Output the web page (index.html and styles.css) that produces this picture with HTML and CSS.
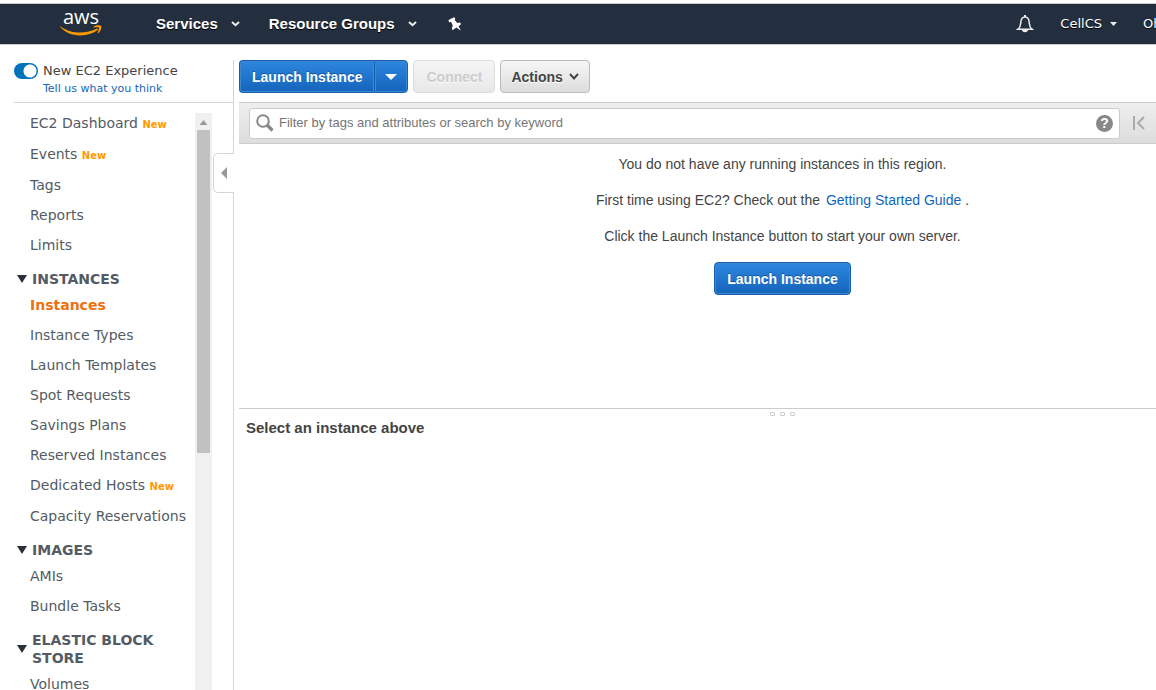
FILE: index.html
```html
<!DOCTYPE html>
<html lang="en">
<head>
<meta charset="utf-8">
<meta name="viewport" content="width=device-width, initial-scale=1">
<title>EC2 Management Console</title>
<link rel="stylesheet" href="styles.css">
</head>
<body>
<header class="topnav">
  <a class="logo" href="#" aria-label="AWS home">
    <svg width="42" height="28" viewBox="0 0 42 28">
      <text x="21" y="14" text-anchor="middle" class="logo-text">aws</text>
      <path d="M0 16.2c7 5 13.500 6.300 20 6.300 6 0 11.800-1.500 17-4l1 1.300c-5 3.800-11 5.700-18 5.700-8 0-15-3.200-20-8.700z" fill="#f90"/>
      <path d="M33.500 16.700c2.500-1.800 6-1.900 7.700-1 .6 2-.6 5.500-2.800 7.500l-.8-.4c.7-1.800 1.700-4.300 1.200-5.200-.7-.7-3.300-.3-5.100-.1z" fill="#f90"/>
    </svg>
  </a>
  <button class="nav-item nav-services" type="button">Services
    <svg width="9" height="6" viewBox="0 0 9 6"><path d="M1 1l3.500 3.200L8 1" class="nav-chevron"/></svg>
  </button>
  <button class="nav-item nav-groups" type="button">Resource Groups
    <svg width="9" height="6" viewBox="0 0 9 6"><path d="M1 1l3.500 3.200L8 1" class="nav-chevron"/></svg>
  </button>
  <button class="nav-icon" type="button" aria-label="Pin shortcuts">
    <svg width="14" height="14" viewBox="0 0 14 14"><path d="M.5 3L6 .3l1.300 1-.6 1.600 2.600 3 2.500-.3 1.400 1.400-2.600 2.200 2.300 4.600-4.400-3.300L4.500 13.300 3.800 11l1-2.300L3.200 5 1 5.200z" fill="#fff"/></svg>
  </button>
  <div class="nav-right">
    <button class="nav-icon" type="button" aria-label="Notifications">
      <svg width="16" height="18" viewBox="0 0 16 18"><path d="M1 14.200c2-1.500 2.500-3 2.700-6C3.900 4 5.300 2 8 2s4.100 2 4.300 6.200c.2 3 .7 4.500 2.700 6z" fill="none" stroke="#eee" stroke-width="1.500"/><path d="M7 0h2v2H7zM5 15h6c-.5 3-5.500 3-6 0z" fill="#eee"/></svg>
    </button>
    <button class="nav-item nav-account" type="button">CellCS
      <svg width="7" height="4" viewBox="0 0 7 4"><path d="M0 0h7L3.500 4z" fill="#eee"/></svg>
    </button>
    <button class="nav-item nav-region" type="button">Ohio</button>
  </div>
</header>

<div class="shell">
  <aside class="sidebar">
    <div class="experience">
      <input class="switch" type="checkbox" id="new-exp" checked>
      <div class="experience-text">
        <label for="new-exp">New EC2 Experience</label>
        <a href="#">Tell us what you think</a>
      </div>
    </div>
    <div class="side-body">
      <nav class="side-nav">
        <a class="item has-new" href="#">EC2 Dashboard <b class="new">New</b></a>
        <a class="item has-new" href="#">Events <b class="new">New</b></a>
        <a class="item" href="#">Tags</a>
        <a class="item" href="#">Reports</a>
        <a class="item" href="#">Limits</a>
        <button class="group" type="button"><i class="tri"></i><span>INSTANCES</span></button>
        <a class="item active" href="#">Instances</a>
        <a class="item" href="#">Instance Types</a>
        <a class="item" href="#">Launch Templates</a>
        <a class="item" href="#">Spot Requests</a>
        <a class="item" href="#">Savings Plans</a>
        <a class="item" href="#">Reserved Instances</a>
        <a class="item has-new" href="#">Dedicated Hosts <b class="new">New</b></a>
        <a class="item" href="#">Capacity Reservations</a>
        <button class="group" type="button"><i class="tri"></i><span>IMAGES</span></button>
        <a class="item" href="#">AMIs</a>
        <a class="item" href="#">Bundle Tasks</a>
        <button class="group" type="button"><i class="tri"></i><span>ELASTIC BLOCK STORE</span></button>
        <a class="item" href="#">Volumes</a>
      </nav>
      <div class="scrollbar"><i class="scroll-up"></i><div class="thumb"></div></div>
    </div>
    <button class="collapse" type="button" aria-label="Collapse sidebar"><svg width="6" height="12" viewBox="0 0 6 12"><path d="M6 0v12L0 6z" fill="#999"/></svg></button>
  </aside>

  <main class="main">
    <div class="actions">
      <div class="split">
        <button class="btn primary" type="button">Launch Instance</button>
        <button class="btn primary drop" type="button" aria-label="More launch options"><svg width="12" height="6" viewBox="0 0 12 6"><path d="M0 0h12L6 6z" fill="#fff"/></svg></button>
      </div>
      <button class="btn" type="button" disabled>Connect</button>
      <button class="btn menu" type="button">Actions
        <svg width="10" height="8" viewBox="0 0 10 8"><path d="M1 1l4 4.500L9 1" fill="none" stroke="#444" stroke-width="2"/></svg>
      </button>
    </div>
    <div class="filterbar">
      <div class="search">
        <svg width="18" height="18" viewBox="0 0 18 18"><circle cx="7" cy="7" r="5.800" fill="none" stroke="#888" stroke-width="2"/><path d="M11 11l5.500 5.500" stroke="#888" stroke-width="3.200"/></svg>
        <input type="text" aria-label="Filter instances" placeholder="Filter by tags and attributes or search by keyword">
        <button class="help" type="button" aria-label="Help">?</button>
      </div>
      <button class="first" type="button" aria-label="First page"><svg width="12" height="14" viewBox="0 0 12 14"><path d="M1 0v14M11 1L5 7l6 6" fill="none" stroke="#aaa" stroke-width="2"/></svg></button>
    </div>
    <section class="empty">
      <p>You do not have any running instances in this region.</p>
      <p>First time using EC2? Check out the <a href="#">Getting Started Guide</a> .</p>
      <p>Click the Launch Instance button to start your own server.</p>
      <button class="btn primary" type="button">Launch Instance</button>
    </section>
    <div class="splitter"><i></i><i></i><i></i></div>
    <h2 class="detail-title">Select an instance above</h2>
  </main>
</div>
</body>
</html>
```
FILE: styles.css
```css
* { box-sizing: border-box; }

body {
  display: flex;
  flex-direction: column;
  height: 100vh;
  margin: 0;
  overflow: hidden;
  background: #fff;
  color: #444;
  font: 14px/20px "Liberation Sans", Arial, sans-serif;
}

a { color: #1166bb; text-decoration: none; }

button {
  margin: 0;
  padding: 0;
  border: 0;
  background: none;
  color: inherit;
  font: inherit;
  white-space: nowrap;
  cursor: pointer;
}

svg { flex: none; display: block; overflow: visible; }

/* Top navigation */
.topnav {
  display: flex;
  align-items: center;
  flex: none;
  height: 42px;
  margin-top: 3px;
  padding-left: 60px;
  overflow: hidden;
  border-top: 1px solid #ccc;
  border-bottom: 1px solid #ccc;
  background: #232f3e;
}

.logo { margin-right: 54px; }
.logo-text { fill: #fff; font: 500 20px "Open Sans", sans-serif; }

.nav-item {
  display: flex;
  align-items: center;
  color: #fff;
  font-size: 15px;
  font-weight: bold;
  text-shadow: 0 1px 0 #000;
}

.nav-services, .nav-groups { gap: 13px; }
.nav-services { margin-right: 29px; }
.nav-groups { margin-right: 31px; }
.nav-chevron { fill: none; stroke: #eee; stroke-width: 2; }
.nav-right { display: flex; align-items: center; margin-left: auto; }

.nav-account {
  gap: 8px;
  margin: 0 26px 0 27px;
  font: 13px/20px "DejaVu Sans", Verdana, sans-serif;
}

.nav-region {
  flex: 0 0 13px;
  width: 13px;
  font: 13px/20px "DejaVu Sans", Verdana, sans-serif;
}

/* Page frame */
.shell { display: flex; flex: 1; min-height: 0; padding-top: 15px; }

/* Sidebar */
.sidebar {
  position: relative;
  display: flex;
  flex-direction: column;
  flex: 0 0 234px;
  min-height: 0;
  padding-left: 14px;
  border-right: 1px solid #d5d5d5;
  font-family: "DejaVu Sans", Verdana, sans-serif;
}

.experience {
  display: flex;
  gap: 5px;
  flex: none;
  height: 43px;
  border-bottom: 1px solid #d5d5d5;
}

.switch {
  appearance: none;
  flex: none;
  width: 24px;
  height: 16px;
  margin: 3px 0 0;
  border-radius: 8px;
  background: radial-gradient(circle at 16px 8px, #fff 6px, #0073bb 7px);
}

.experience-text { display: flex; flex-direction: column; padding-top: 1px; }
.experience-text label { font-size: 13px; line-height: 20px; }
.experience-text a { font-size: 11px; line-height: 16px; }

.side-body { display: flex; flex: 1; min-height: 0; overflow: hidden; }
.side-nav { flex: 1; min-width: 0; padding-top: 5px; }

.item {
  display: block;
  padding-left: 16px;
  color: #545b64;
  line-height: 30px;
  white-space: nowrap;
}

.has-new { padding-bottom: 1px; }
.active { color: #ec7211; font-weight: bold; }
.new { color: #f90; font-size: 10px; line-height: 1; }

.group {
  display: flex;
  align-items: center;
  gap: 5px;
  padding: 10px 0 2px 3px;
  color: #545b64;
  font-weight: bold;
  font-size: 14px;
  line-height: 18px;
  text-align: left;
  white-space: normal;
}

.tri {
  flex: none;
  border: solid transparent;
  border-width: 8px 5px 0;
  border-top-color: #2b313a;
}

.scrollbar {
  flex: 0 0 17px;
  margin: 10px 21px 0 0;
  padding: 0 2px;
  background: #f0f0f0;
}

.scroll-up {
  display: block;
  width: 8px;
  height: 17px;
  margin: 0 auto;
  background: #999;
  clip-path: polygon(50% 7px, 100% 12px, 0 12px);
}

.thumb { height: 56%; background: #c1c1c1; }

.collapse {
  position: absolute;
  top: 93px;
  right: -1px;
  display: flex;
  align-items: center;
  width: 21px;
  height: 40px;
  padding-left: 7px;
  border: 1px solid #d5d5d5;
  border-right: 0;
  border-radius: 5px 0 0 5px;
  background: #fff;
}

/* Main column */
.main { flex: 1; min-width: 0; padding-left: 5px; }
.actions { display: flex; gap: 5px; margin-bottom: 9px; }

.btn {
  display: flex;
  align-items: center;
  gap: 6px;
  height: 33px;
  padding: 0 12px;
  border: 1px solid #bbb;
  border-radius: 4px;
  background: linear-gradient(#f6f6f6, #ddd);
  color: #444;
  font-size: 14px;
  font-weight: bold;
  text-shadow: 0 1px 0 #fff;
}

.btn:disabled { border-color: #ddd; background: linear-gradient(#f5f5f5, #e8e8e8); color: #ccc; }
.menu { padding: 0 10px; }

.primary {
  border-color: #1560ac;
  background: linear-gradient(#2e86de, #1464bb);
  box-shadow: inset 0 0 0 1px #3b87d2;
  color: #fff;
  text-shadow: 0 -1px 0 #1155a0;
}

.split { display: flex; }
.split .btn:first-child { border-radius: 4px 0 0 4px; border-right: 0; }
.split .drop { padding: 0 10px; border-radius: 0 4px 4px 0; }

.filterbar {
  display: flex;
  align-items: center;
  height: 42px;
  padding-left: 10px;
  border: solid #ccc;
  border-width: 1px 0;
  background: linear-gradient(#eee, #ddd);
}

.search {
  display: flex;
  align-items: center;
  gap: 5px;
  flex: 1;
  height: 31px;
  padding: 0 6px;
  border: 1px solid #ccc;
  border-radius: 3px;
  background: #fff;
}

.search input {
  flex: 1;
  min-width: 0;
  padding: 0;
  border: 0;
  outline: 0;
  background: none;
  color: #444;
  font: inherit;
  font-size: 13px;
}

.search input::placeholder { color: #757575; opacity: 1; }

.help {
  width: 17px;
  height: 17px;
  border-radius: 50%;
  background: #888;
  color: #fff;
  font-size: 14px;
  font-weight: bold;
  line-height: 17px;
}

.first { padding: 0 11px 0 13px; }

.empty {
  display: flex;
  flex-direction: column;
  align-items: center;
  gap: 16px;
  padding: 10px 0 113px 170px;
  border-bottom: 1px solid #ccc;
  text-align: center;
}

.empty p { margin: 0; }
.empty a { margin: 0 0 0 2px; }

.splitter {
  display: flex;
  justify-content: center;
  gap: 5px;
  height: 9px;
  padding: 3px 0 0 170px;
}

.splitter i {
  width: 5px;
  height: 4px;
  border: 1px solid #ccc;
  border-radius: 1px;
}

.detail-title { margin: 0 0 0 7px; font-size: 15px; line-height: 20px; }
```
